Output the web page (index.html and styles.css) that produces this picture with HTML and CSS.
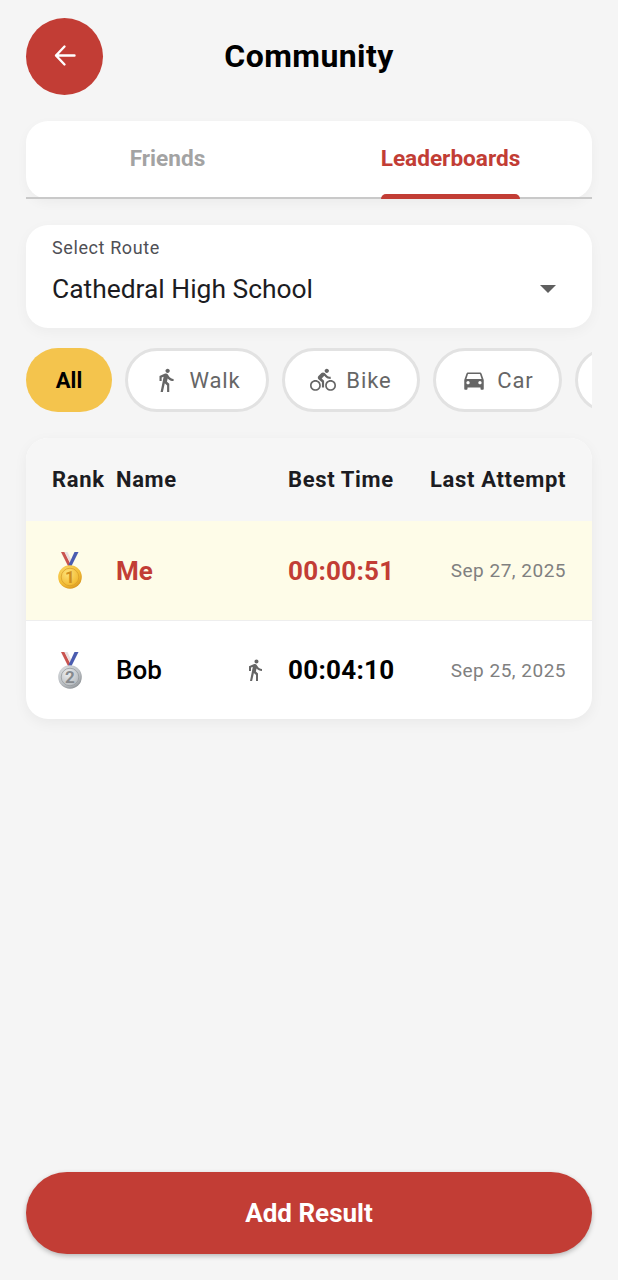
FILE: index.html
```html
<!DOCTYPE html>
<html lang="en">

<head>
    <meta charset="UTF-8">
    <meta name="viewport" content="width=device-width, initial-scale=1.0">
    <title>Community</title>
    <link rel="stylesheet" href="styles.css">
</head>

<body>
    <header class="header">
        <button class="back-btn" aria-label="Back">
            <svg class="back-icon" width="24" height="24" viewBox="0 0 24 24" fill="none" stroke="#fff" stroke-width="2.4" stroke-linecap="round" stroke-linejoin="round">
                <path d="M21.5 11.5H3M11.5 2.5l-8.5 9 8.5 9" />
            </svg>
        </button>
        <h1 class="title">Community</h1>
    </header>

    <nav class="tabs">
        <div class="tab">Friends</div>
        <div class="tab tab-active">Leaderboards<span class="tab-bar"></span></div>
    </nav>

    <div class="select-card">
        <div class="select-label">Select Route</div>
        <div class="select-row">
            <span class="select-value">Cathedral High School</span>
            <span class="select-arrow"></span>
        </div>
    </div>

    <div class="chips">
        <div class="chip chip-active">All</div>
        <div class="chip chip-walk">
            <svg class="chip-icon" viewBox="0 0 24 24"><path d="M13.5 5.5c1.1 0 2-.9 2-2s-.9-2-2-2-2 .9-2 2 .9 2 2 2zM9.8 8.9L7 23h2.1l1.8-8 2.1 2v6h2v-7.5l-2.1-2 .6-3C14.8 12 16.8 13 19 13v-2c-1.9 0-3.5-1-4.3-2.4l-1-1.6c-.4-.6-1-1-1.7-1-.3 0-.5.1-.8.1L6 8.3V13h2V9.6l1.8-.7" /></svg>
            Walk
        </div>
        <div class="chip chip-bike">
            <svg class="chip-icon" viewBox="0 0 24 24"><path d="M15.5 5.5c1.1 0 2-.9 2-2s-.9-2-2-2-2 .9-2 2 .9 2 2 2zM5 12c-2.8 0-5 2.2-5 5s2.2 5 5 5 5-2.2 5-5-2.2-5-5-5zm0 8.5c-1.9 0-3.5-1.6-3.5-3.5s1.6-3.5 3.5-3.5 3.5 1.6 3.5 3.5-1.6 3.5-3.5 3.5zm5.8-10l2.4-2.4.8.8c1.3 1.3 3 2.1 5.1 2.1V9c-1.5 0-2.7-.6-3.6-1.5l-1.9-1.9c-.5-.4-1-.6-1.6-.6s-1.1.2-1.4.6L7.8 8.4c-.4.4-.6.9-.6 1.4 0 .6.2 1.1.6 1.4L11 14v5h2v-6.2l-2.2-2.3zM19 12c-2.8 0-5 2.2-5 5s2.2 5 5 5 5-2.2 5-5-2.2-5-5-5zm0 8.5c-1.9 0-3.5-1.6-3.5-3.5s1.6-3.5 3.5-3.5 3.5 1.6 3.5 3.5-1.6 3.5-3.5 3.5z" /></svg>
            Bike
        </div>
        <div class="chip chip-car">
            <svg class="chip-icon" viewBox="0 0 24 24"><path d="M18.92 6.01C18.72 5.42 18.16 5 17.5 5h-11c-.66 0-1.21.42-1.42 1.01L3 12v8c0 .55.45 1 1 1h1c.55 0 1-.45 1-1v-1h12v1c0 .55.45 1 1 1h1c.55 0 1-.45 1-1v-8l-2.08-5.99zM6.5 16c-.83 0-1.5-.67-1.5-1.5S5.67 13 6.5 13s1.5.67 1.5 1.5S7.33 16 6.5 16zm11 0c-.83 0-1.5-.67-1.5-1.5s.67-1.5 1.5-1.5 1.5.67 1.5 1.5-.67 1.5-1.5 1.5zM5 11l1.5-4.5h11L19 11H5z" /></svg>
            Car
        </div>
        <div class="chip chip-more"></div>
    </div>

    <section class="board">
        <div class="row row-head">
            <div>Rank</div>
            <div>Name</div>
            <div>Best Time</div>
            <div class="col-last">Last Attempt</div>
        </div>

        <div class="row row-me">
            <div>
                <svg class="medal" viewBox="0 0 26 37">
                    <defs>
                        <radialGradient id="gold" cx="40%" cy="35%" r="70%">
                            <stop offset="0" stop-color="#fde27a" />
                            <stop offset="0.7" stop-color="#f3bd35" />
                            <stop offset="1" stop-color="#d4901c" />
                        </radialGradient>
                    </defs>
                    <path d="M4 0h3.5l6.5 13-2.5 2z" fill="#c9534f" />
                    <path d="M7.5 0h3l5 10.5-1.5 2.5z" fill="#e9dfe0" />
                    <path d="M21.5 0h-4l-6 13 2 3z" fill="#4a5cb0" />
                    <circle cx="13" cy="25" r="11.8" fill="url(#gold)" />
                    <circle cx="13" cy="25" r="8.8" fill="none" stroke="#d99f2b" stroke-width="0.8" />
                    <text class="medal-num medal-num-gold" x="13" y="31" text-anchor="middle">1</text>
                </svg>
            </div>
            <div class="name name-me">Me</div>
            <div class="time time-me">00:00:51</div>
            <div class="col-last date">Sep 27, 2025</div>
        </div>

        <div class="row row-bob">
            <div>
                <svg class="medal" viewBox="0 0 26 37">
                    <defs>
                        <radialGradient id="silver" cx="40%" cy="35%" r="70%">
                            <stop offset="0" stop-color="#eceef0" />
                            <stop offset="0.7" stop-color="#bcc0c4" />
                            <stop offset="1" stop-color="#888c90" />
                        </radialGradient>
                    </defs>
                    <path d="M4 0h3.5l6.5 13-2.5 2z" fill="#c9534f" />
                    <path d="M7.5 0h3l5 10.5-1.5 2.5z" fill="#e9dfe0" />
                    <path d="M21.5 0h-4l-6 13 2 3z" fill="#4a5cb0" />
                    <circle cx="13" cy="25" r="11.8" fill="url(#silver)" />
                    <circle cx="13" cy="25" r="8.8" fill="none" stroke="#969a9e" stroke-width="0.8" />
                    <text class="medal-num medal-num-silver" x="13" y="31" text-anchor="middle">2</text>
                </svg>
            </div>
            <div class="name name-bob">
                Bob
                <svg class="mode-icon" viewBox="0 0 24 24"><path d="M13.5 5.5c1.1 0 2-.9 2-2s-.9-2-2-2-2 .9-2 2 .9 2 2 2zM9.8 8.9L7 23h2.1l1.8-8 2.1 2v6h2v-7.5l-2.1-2 .6-3C14.8 12 16.8 13 19 13v-2c-1.9 0-3.5-1-4.3-2.4l-1-1.6c-.4-.6-1-1-1.7-1-.3 0-.5.1-.8.1L6 8.3V13h2V9.6l1.8-.7" /></svg>
            </div>
            <div class="time">00:04:10</div>
            <div class="col-last date">Sep 25, 2025</div>
        </div>
    </section>

    <button class="add-btn">Add Result</button>
</body>

</html>
```

FILE: styles.css
```css
* {
    box-sizing: border-box;
}

body {
    margin: 0;
    min-height: 100vh;
    padding: 18px 26px 26px;
    display: flex;
    flex-direction: column;
    font-family: Roboto, "Liberation Sans", sans-serif;
    color: #1c1c22;
    background-color: #f5f5f5;
}

.header {
    display: flex;
    align-items: center;
    height: 77px;
    position: relative;
}

.back-btn {
    width: 77px;
    height: 77px;
    padding: 0;
    display: flex;
    align-items: center;
    justify-content: center;
    background-color: #c23d35;
    border: none;
    border-radius: 50%;
}

.back-icon {
    margin-bottom: 1px;
}

/* title sits over the header, centred on the page */
.title {
    position: absolute;
    left: 0;
    right: 0;
    top: 19px;
    margin: 0;
    line-height: 38px;
    text-align: center;
    font-size: 32px;
    font-weight: 700;
    letter-spacing: 0.4px;
    color: #000;
}

.tabs {
    display: flex;
    height: 78px;
    margin-top: 26px;
    background-color: #fff;
    border-radius: 22px;
    box-shadow: 0 4px 12px rgba(0, 0, 0, 0.04);
    position: relative;
}

/* the grey line under the tabs runs square past the rounded corners */
.tabs::after {
    content: "";
    position: absolute;
    left: 0;
    right: 0;
    bottom: 0;
    height: 2px;
    background-color: #c9c9c9;
}

.tab {
    width: 283px;
    height: 75px;
    display: flex;
    align-items: center;
    justify-content: center;
    font-size: 22.6px;
    font-weight: 700;
    color: #a3a3a3;
    position: relative;
}

.tab-active {
    color: #c23d35;
}

.tab-bar {
    position: absolute;
    left: 72px;
    width: 139px;
    bottom: -3px;
    height: 5px;
    background-color: #c23d35;
    border-radius: 5px 5px 0 0;
    z-index: 1;
}

.select-card {
    height: 103px;
    margin-top: 26px;
    padding: 12px 26px 0;
    background-color: #fff;
    border-radius: 22px;
    box-shadow: 0 4px 14px rgba(0, 0, 0, 0.04);
}

.select-label {
    font-size: 18px;
    line-height: 21px;
    letter-spacing: 0.6px;
    color: #4f4f55;
}

.select-row {
    display: flex;
    align-items: center;
    justify-content: space-between;
    margin-top: 16px;
}

.select-value {
    font-size: 26.4px;
    line-height: 30px;
    color: #1c1c22;
}

.select-arrow {
    width: 0;
    height: 0;
    margin-right: 10px;
    border-left: 8px solid transparent;
    border-right: 8px solid transparent;
    border-top: 8px solid #5f5f5f;
}

.chips {
    display: flex;
    gap: 13px;
    height: 64px;
    margin-top: 20px;
    overflow: hidden;
}

.chip {
    flex: none;
    height: 64px;
    display: flex;
    align-items: center;
    justify-content: center;
    gap: 10px;
    font-size: 22px;
    font-weight: 450;
    letter-spacing: 0.9px;
    color: #666;
    background-color: #fff;
    border: 3px solid #e2e2e2;
    border-radius: 32px;
}

.chip-active {
    width: 86px;
    color: #000;
    font-weight: 700;
    letter-spacing: 0;
    background-color: #f4c44d;
    border: none;
}

.chip-walk {
    width: 144px;
}

.chip-bike {
    width: 138px;
}

.chip-car {
    width: 129px;
}

.chip-more {
    width: 120px;
}

.chip-icon {
    width: 26px;
    height: 26px;
    fill: #666;
}

.board {
    margin-top: 26px;
    background-color: #fff;
    border-radius: 22px;
    overflow: hidden;
    box-shadow: 0 4px 14px rgba(0, 0, 0, 0.05);
}

.row {
    display: grid;
    grid-template-columns: 64px 172px 106px 1fr;
    align-items: center;
    padding: 0 26px;
}

.row-head {
    height: 83px;
    font-size: 22px;
    font-weight: 700;
    letter-spacing: 0.65px;
    white-space: nowrap;
    background-color: #f6f6f6;
}

.row-me {
    height: 100px;
    background-color: #fefce8;
    border-bottom: 1px solid #eee;
}

.row-bob {
    height: 98px;
}

.col-last {
    text-align: right;
    white-space: nowrap;
}

.medal {
    display: block;
    width: 26px;
    height: 37px;
    margin-left: 5px;
}

.medal-num {
    font-size: 17px;
    font-weight: 700;
}

.medal-num-gold {
    fill: #d08f1e;
}

.medal-num-silver {
    fill: #85898d;
}

.name {
    display: flex;
    align-items: center;
    justify-content: space-between;
    padding-right: 21px;
    font-size: 26px;
    color: #000;
}

.name-me {
    font-weight: 700;
    color: #c23d35;
}

.name-bob {
    font-weight: 500;
}

.mode-icon {
    width: 24px;
    height: 24px;
    fill: #666;
}

.time {
    font-size: 26px;
    font-weight: 700;
    letter-spacing: 0.3px;
    white-space: nowrap;
    color: #000;
}

.time-me {
    color: #c23d35;
}

.date {
    font-size: 19px;
    letter-spacing: 0.5px;
    color: #808080;
}

.add-btn {
    width: 100%;
    height: 82px;
    margin-top: auto;
    font-family: inherit;
    font-size: 26px;
    font-weight: 700;
    color: #fff;
    background-color: #c23d35;
    border: none;
    border-radius: 41px;
    box-shadow: 0 2px 5px rgba(0, 0, 0, 0.25);
}
```
